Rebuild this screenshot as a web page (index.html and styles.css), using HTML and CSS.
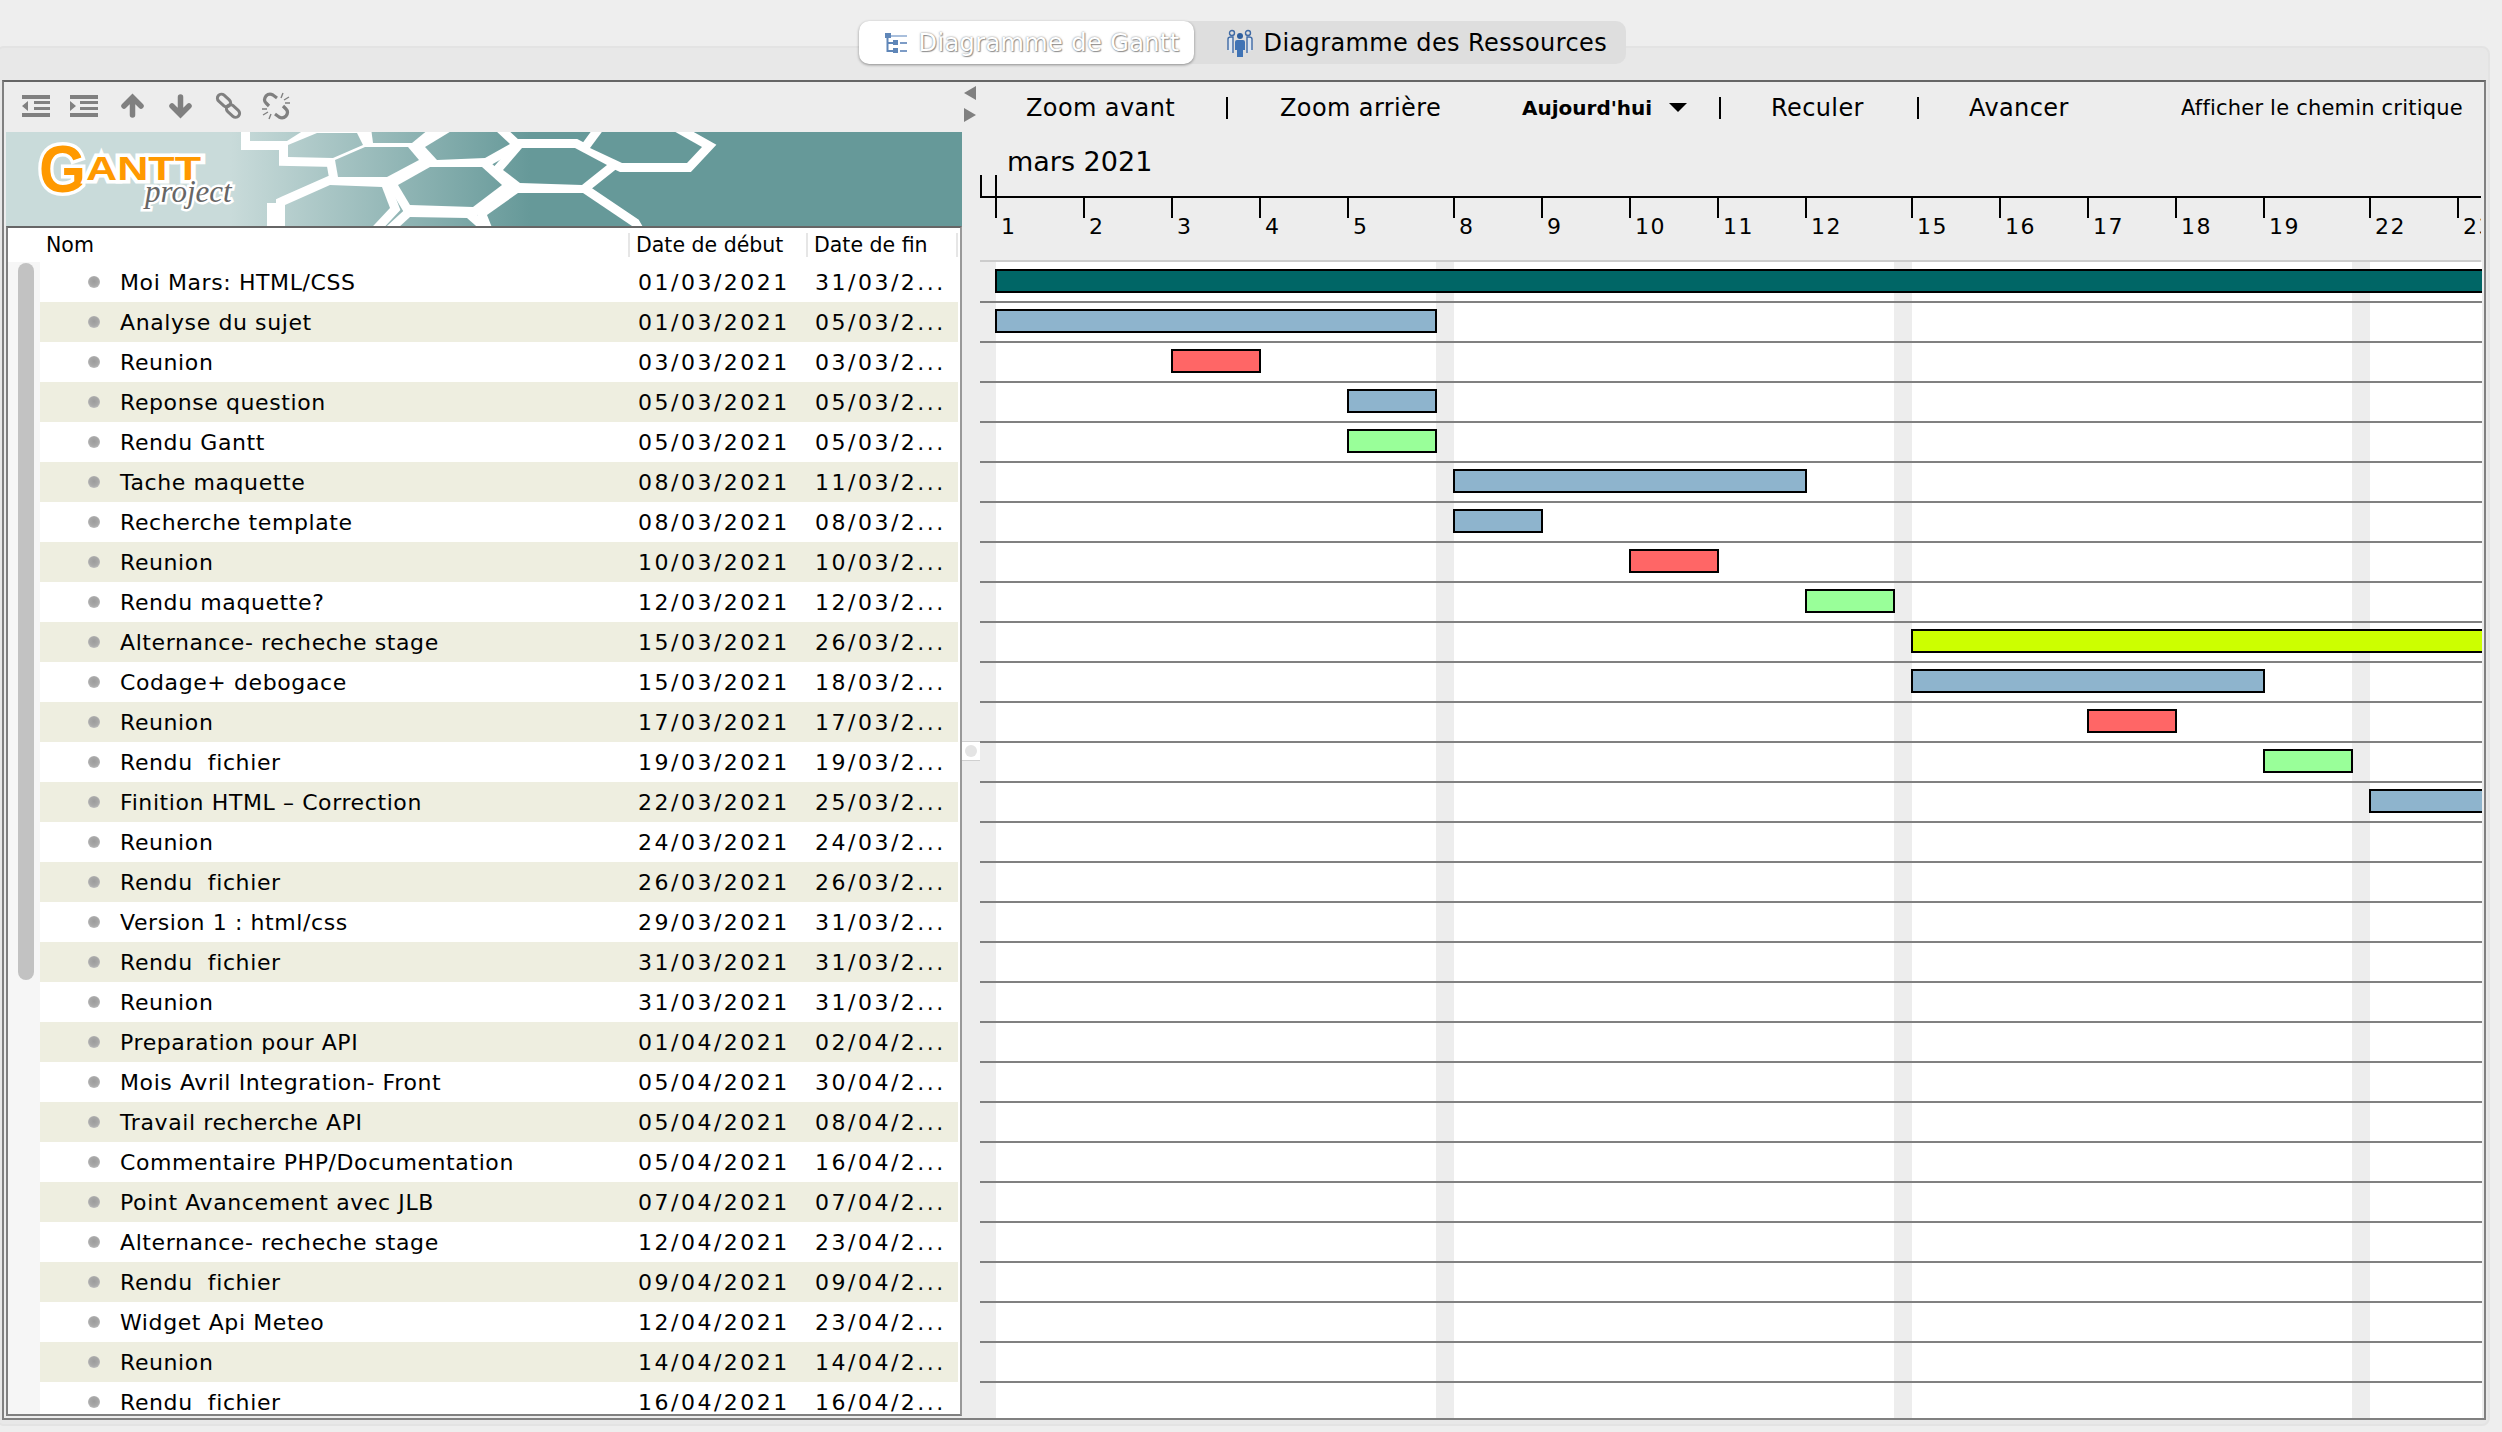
FILE: index.html
```html
<!DOCTYPE html>
<html lang="fr">
<head>
    <meta charset="UTF-8">
    <title>GanttProject</title>
    <link rel="stylesheet" href="styles.css">
</head>
<body>
    <div class="pane"></div>
    <div class="tabs-bar">
        <div class="tabs">
            <div class="tab tab-active">
                <svg class="tab-icon" width="22" height="21" viewBox="0 0 22 21">
                    <rect x="6" y="2" width="16" height="2" fill="#a9bfdc"/>
                    <rect x="0" y="0" width="6" height="5" fill="#5f86b8"/>
                    <path d="M2.5 5V18H8M2.5 10H8" fill="none" stroke="#5f86b8" stroke-width="2"/>
                    <rect x="8" y="7" width="5" height="5" fill="#5f86b8"/>
                    <rect x="8" y="15" width="5" height="5" fill="#5f86b8"/>
                    <rect x="15" y="9" width="7" height="2" fill="#7d9cc6"/>
                    <rect x="15" y="17" width="7" height="2" fill="#7d9cc6"/>
                </svg>
                <span class="tab-label-off">Diagramme de Gantt</span>
            </div>
            <div class="tab tab-other">
                <svg class="tab-icon" width="26" height="28" viewBox="0 0 26 28">
                    <circle cx="5" cy="4" r="2.5" fill="none" stroke="#3f6aa5" stroke-width="1.4"/>
                    <circle cx="21" cy="4" r="2.5" fill="none" stroke="#3f6aa5" stroke-width="1.4"/>
                    <path d="M1 21V10Q1 8 4 8H6V24M25 21V10Q25 8 22 8H20V24" fill="#dce6f2" stroke="#3f6aa5" stroke-width="1.4"/>
                    <circle cx="13" cy="7" r="3" fill="#2f5f9f"/>
                    <path d="M8 21V13Q8 11 10 11H16Q18 11 18 13V21H16V28H10V21Z" fill="#3f73b5"/>
                </svg>
                <span>Diagramme des Ressources</span>
            </div>
        </div>
    </div>

    <div class="frame">
        <div class="left-panel">
            <div class="task-toolbar">
                <svg class="tool-icon" viewBox="0 0 28 24"><path d="M0 1H28V5H0ZM12 7H28V10H12ZM12 13H28V16H12ZM0 19H28V23H0ZM0 12L6 7V17Z"/></svg>
                <svg class="tool-icon" viewBox="0 0 28 24"><path d="M0 1H28V5H0ZM10 7H28V10H10ZM10 13H28V16H10ZM0 19H28V23H0ZM6 12L0 7V17Z"/></svg>
                <svg class="tool-icon tool-line" viewBox="0 0 28 24"><path d="M14.5 21V4M6 12L14.5 3.5L23 12"/></svg>
                <svg class="tool-icon tool-line" viewBox="0 0 28 24"><path d="M14.5 3V20M6 12L14.5 20.5L23 12"/></svg>
                <svg class="tool-icon" viewBox="0 0 28 28"><g fill="none" stroke="#808080" stroke-width="3"><rect x="2.5" y="4.5" width="15" height="8" rx="4" transform="rotate(42 10 8.5)"/><rect x="11.5" y="15" width="15" height="8" rx="4" transform="rotate(42 19 19)"/></g></svg>
                <svg class="tool-icon" viewBox="0 0 28 28"><g fill="none" stroke="#808080" stroke-width="3.2"><path d="M15 6L11 3Q7 1 4 4Q1 8 4 11L7 14"/><path d="M13 22L17 25Q21 27 24 24Q27 20 24 17L21 14"/></g><g stroke="#808080" stroke-width="1.4"><path d="M19 6L21 1M22 8L27 5M23 11L28 11M9 22L7 27M6 20L1 23M5 17L0 17"/></g></svg>
            </div>
            <svg class="banner" width="956" height="94" viewBox="6 132 956 94">
                <defs>
                    <linearGradient id="banner-fill" gradientUnits="userSpaceOnUse" x1="230" y1="0" x2="530" y2="0">
                        <stop offset="0" stop-color="#c9dbda"/>
                        <stop offset="1" stop-color="#669999"/>
                    </linearGradient>
                    <g id="hexes">
                        <polygon points="250,120 320,120 287,141 250,141"/>
                        <polygon points="288,145 317,133 357,133 363,145 333,158 288,157"/>
                        <polygon points="335,160 365,147 408,147 419,160 387,177 338,177"/>
                        <polygon points="370,120 440,120 412,143 373,143"/>
                        <polygon points="425,147 453,130 495,130 510,144 485,158 437,160"/>
                        <polygon points="398,185 430,167 482,167 502,185 473,207 410,205"/>
                        <polygon points="285,205 330,185 382,187 390,208 360,240 285,240"/>
                        <polygon points="385,240 410,217 467,218 492,240"/>
                        <polygon points="522,148 575,148 607,165 582,185 520,183 503,170"/>
                        <polygon points="590,148 607,125 663,125 702,147 687,163 622,163"/>
                        <polygon points="487,215 518,193 583,193 632,226 640,240 497,240"/>
                    </g>
                </defs>
                <rect x="6" y="132" width="956" height="94" fill="url(#banner-fill)"/>
                <use href="#hexes" class="hex-lines"/>
                <rect class="hex-white" x="267" y="203" width="20" height="24"/>
                <use href="#hexes" class="hex-fills"/>
                <text class="logo-g" x="39" y="192" textLength="47" lengthAdjust="spacingAndGlyphs">G</text>
                <text class="logo-antt" x="86" y="180" textLength="115" lengthAdjust="spacingAndGlyphs">ANTT</text>
                <text class="logo-project" x="145" y="202">project</text>
            </svg>
            <div class="table">
                <div class="table-head">
                    <div class="col-name">Nom</div>
                    <div class="col-start">Date de début</div>
                    <div class="col-end">Date de fin</div>
                </div>
                <div class="table-body">
                    <div class="scroll-track"><div class="scroll-thumb"></div></div>
                    <div class="rows">
                        <div class="row"><i class="bullet"></i><div class="cell-name">Moi Mars: HTML/CSS</div><div class="cell-start">01/03/2021</div><div class="cell-end">31/03/2...</div></div>
                        <div class="row"><i class="bullet"></i><div class="cell-name">Analyse du sujet</div><div class="cell-start">01/03/2021</div><div class="cell-end">05/03/2...</div></div>
                        <div class="row"><i class="bullet"></i><div class="cell-name">Reunion</div><div class="cell-start">03/03/2021</div><div class="cell-end">03/03/2...</div></div>
                        <div class="row"><i class="bullet"></i><div class="cell-name">Reponse question</div><div class="cell-start">05/03/2021</div><div class="cell-end">05/03/2...</div></div>
                        <div class="row"><i class="bullet"></i><div class="cell-name">Rendu Gantt</div><div class="cell-start">05/03/2021</div><div class="cell-end">05/03/2...</div></div>
                        <div class="row"><i class="bullet"></i><div class="cell-name">Tache maquette</div><div class="cell-start">08/03/2021</div><div class="cell-end">11/03/2...</div></div>
                        <div class="row"><i class="bullet"></i><div class="cell-name">Recherche template</div><div class="cell-start">08/03/2021</div><div class="cell-end">08/03/2...</div></div>
                        <div class="row"><i class="bullet"></i><div class="cell-name">Reunion</div><div class="cell-start">10/03/2021</div><div class="cell-end">10/03/2...</div></div>
                        <div class="row"><i class="bullet"></i><div class="cell-name">Rendu maquette?</div><div class="cell-start">12/03/2021</div><div class="cell-end">12/03/2...</div></div>
                        <div class="row"><i class="bullet"></i><div class="cell-name">Alternance- recheche stage</div><div class="cell-start">15/03/2021</div><div class="cell-end">26/03/2...</div></div>
                        <div class="row"><i class="bullet"></i><div class="cell-name">Codage+ debogace</div><div class="cell-start">15/03/2021</div><div class="cell-end">18/03/2...</div></div>
                        <div class="row"><i class="bullet"></i><div class="cell-name">Reunion</div><div class="cell-start">17/03/2021</div><div class="cell-end">17/03/2...</div></div>
                        <div class="row"><i class="bullet"></i><div class="cell-name">Rendu&nbsp; fichier</div><div class="cell-start">19/03/2021</div><div class="cell-end">19/03/2...</div></div>
                        <div class="row"><i class="bullet"></i><div class="cell-name">Finition HTML – Correction</div><div class="cell-start">22/03/2021</div><div class="cell-end">25/03/2...</div></div>
                        <div class="row"><i class="bullet"></i><div class="cell-name">Reunion</div><div class="cell-start">24/03/2021</div><div class="cell-end">24/03/2...</div></div>
                        <div class="row"><i class="bullet"></i><div class="cell-name">Rendu&nbsp; fichier</div><div class="cell-start">26/03/2021</div><div class="cell-end">26/03/2...</div></div>
                        <div class="row"><i class="bullet"></i><div class="cell-name">Version 1 : html/css</div><div class="cell-start">29/03/2021</div><div class="cell-end">31/03/2...</div></div>
                        <div class="row"><i class="bullet"></i><div class="cell-name">Rendu&nbsp; fichier</div><div class="cell-start">31/03/2021</div><div class="cell-end">31/03/2...</div></div>
                        <div class="row"><i class="bullet"></i><div class="cell-name">Reunion</div><div class="cell-start">31/03/2021</div><div class="cell-end">31/03/2...</div></div>
                        <div class="row"><i class="bullet"></i><div class="cell-name">Preparation pour API</div><div class="cell-start">01/04/2021</div><div class="cell-end">02/04/2...</div></div>
                        <div class="row"><i class="bullet"></i><div class="cell-name">Mois Avril Integration- Front</div><div class="cell-start">05/04/2021</div><div class="cell-end">30/04/2...</div></div>
                        <div class="row"><i class="bullet"></i><div class="cell-name">Travail recherche API</div><div class="cell-start">05/04/2021</div><div class="cell-end">08/04/2...</div></div>
                        <div class="row"><i class="bullet"></i><div class="cell-name">Commentaire PHP/Documentation</div><div class="cell-start">05/04/2021</div><div class="cell-end">16/04/2...</div></div>
                        <div class="row"><i class="bullet"></i><div class="cell-name">Point Avancement avec JLB</div><div class="cell-start">07/04/2021</div><div class="cell-end">07/04/2...</div></div>
                        <div class="row"><i class="bullet"></i><div class="cell-name">Alternance- recheche stage</div><div class="cell-start">12/04/2021</div><div class="cell-end">23/04/2...</div></div>
                        <div class="row"><i class="bullet"></i><div class="cell-name">Rendu&nbsp; fichier</div><div class="cell-start">09/04/2021</div><div class="cell-end">09/04/2...</div></div>
                        <div class="row"><i class="bullet"></i><div class="cell-name">Widget Api Meteo</div><div class="cell-start">12/04/2021</div><div class="cell-end">23/04/2...</div></div>
                        <div class="row"><i class="bullet"></i><div class="cell-name">Reunion</div><div class="cell-start">14/04/2021</div><div class="cell-end">14/04/2...</div></div>
                        <div class="row"><i class="bullet"></i><div class="cell-name">Rendu&nbsp; fichier</div><div class="cell-start">16/04/2021</div><div class="cell-end">16/04/2...</div></div>
                    </div>
                </div>
            </div>
        </div>

        <div class="splitter">
            <i class="arrow-left"></i>
            <i class="arrow-right"></i>
            <i class="split-dot"></i>
        </div>

        <div class="right-panel">
            <div class="chart-toolbar">
                <span class="btn btn-zoom-in">Zoom avant</span>
                <span class="sep sep-1"></span>
                <span class="btn btn-zoom-out">Zoom arrière</span>
                <span class="btn-today">Aujourd'hui<i class="caret"></i></span>
                <span class="sep sep-2"></span>
                <span class="btn btn-back">Reculer</span>
                <span class="sep sep-3"></span>
                <span class="btn btn-next">Avancer</span>
                <span class="btn-critical">Afficher le chemin critique</span>
            </div>
            <div class="month-row">
                <i class="month-tick month-tick-first"></i>
                <i class="month-tick"></i>
                <span class="month">mars 2021</span>
            </div>
            <div class="days">
                <span class="day day-first"></span>
                <span class="day">1</span><span class="day">2</span><span class="day">3</span><span class="day">4</span><span class="day day-last">5</span>
                <span class="day">8</span><span class="day">9</span><span class="day">10</span><span class="day">11</span><span class="day day-last">12</span>
                <span class="day">15</span><span class="day">16</span><span class="day">17</span><span class="day">18</span><span class="day day-last">19</span>
                <span class="day">22</span><span class="day">23</span>
            </div>
            <div class="chart">
                <i class="weekend" style="left: 0; width: 16px"></i>
                <i class="weekend" style="left: 456px"></i>
                <i class="weekend" style="left: 914px"></i>
                <i class="weekend" style="left: 1372px"></i>
                <div class="chart-row"><i class="bar bar-teal" style="left: 15px; width: 1500px"></i></div>
                <div class="chart-row"><i class="bar bar-blue" style="left: 15px; width: 442px"></i></div>
                <div class="chart-row"><i class="bar bar-red" style="left: 191px; width: 90px"></i></div>
                <div class="chart-row"><i class="bar bar-blue" style="left: 367px; width: 90px"></i></div>
                <div class="chart-row"><i class="bar bar-green" style="left: 367px; width: 90px"></i></div>
                <div class="chart-row"><i class="bar bar-blue" style="left: 473px; width: 354px"></i></div>
                <div class="chart-row"><i class="bar bar-blue" style="left: 473px; width: 90px"></i></div>
                <div class="chart-row"><i class="bar bar-red" style="left: 649px; width: 90px"></i></div>
                <div class="chart-row"><i class="bar bar-green" style="left: 825px; width: 90px"></i></div>
                <div class="chart-row"><i class="bar bar-lime" style="left: 931px; width: 800px"></i></div>
                <div class="chart-row"><i class="bar bar-blue" style="left: 931px; width: 354px"></i></div>
                <div class="chart-row"><i class="bar bar-red" style="left: 1107px; width: 90px"></i></div>
                <div class="chart-row"><i class="bar bar-green" style="left: 1283px; width: 90px"></i></div>
                <div class="chart-row"><i class="bar bar-blue" style="left: 1389px; width: 400px"></i></div>
                <div class="chart-row"></div><div class="chart-row"></div><div class="chart-row"></div>
                <div class="chart-row"></div><div class="chart-row"></div><div class="chart-row"></div>
                <div class="chart-row"></div><div class="chart-row"></div><div class="chart-row"></div>
                <div class="chart-row"></div><div class="chart-row"></div><div class="chart-row"></div>
                <div class="chart-row"></div><div class="chart-row"></div><div class="chart-row"></div>
            </div>
        </div>
    </div>
</body>
</html>
```

FILE: styles.css
```css
* {
    box-sizing: border-box;
}
html, body {
    margin: 0;
    padding: 0;
}
body {
    position: relative;
    width: 2502px;
    height: 1432px;
    overflow: hidden;
    background-color: #eeeeee;
    font-family: "DejaVu Sans", sans-serif;
    color: #000;
    padding: 21px 16px 0 2px;
}
/* faint tab pane behind everything */
.pane {
    position: absolute;
    left: -4px;
    top: 46px;
    width: 2494px;
    height: 1380px;
    z-index: -1;
    background-color: #e8e8e8;
    border: 2px solid #e3e3e3;
    border-radius: 8px;
}
.tabs-bar {
    height: 59px;
    display: flex;
    justify-content: center;
    padding-right: 4px;
}
.tabs {
    display: flex;
    align-self: flex-start;
    height: 43px;
    background-color: #dedede;
    border-radius: 10px;
}
.tab {
    display: flex;
    align-items: center;
    gap: 11px;
    padding-top: 1px;
    font-size: 24px;
    letter-spacing: 0.4px;
    white-space: nowrap;
}
.tab-active {
    width: 335px;
    padding-left: 26px;
    gap: 12px;
    background-color: #fff;
    border-radius: 10px;
    box-shadow: 0 1px 3px rgba(0, 0, 0, 0.4);
}
.tab-other {
    width: 432px;
    padding-left: 33px;
}
.tab-label-off {
    color: #fff;
    text-shadow: 0 0 2px #777, 1px 1px 1px #999;
}
.frame {
    height: 1340px;
    display: flex;
    border: 2px solid #808080;
    border-top-color: #666;
    background-color: #ededed;
}
.left-panel {
    width: 958px;
    display: flex;
    flex-direction: column;
    flex: none;
    padding: 0 0 2px 2px;
}
.task-toolbar {
    height: 50px;
    flex: none;
    display: flex;
    align-items: center;
    gap: 20px;
    padding: 0 0 2px 16px;
}
.tool-icon {
    width: 28px;
    height: 28px;
    fill: #808080;
}
.tool-line {
    fill: none;
    stroke: #808080;
    stroke-width: 5.5;
    stroke-linecap: round;
}
.banner {
    display: block;
    flex: none;
}
.hex-lines {
    fill: none;
    stroke: #fff;
    stroke-width: 18;
}
.hex-white {
    fill: #fff;
}
.hex-fills {
    fill: url(#banner-fill);
    stroke: none;
}
.logo-g, .logo-antt {
    font-family: "Liberation Sans", sans-serif;
    font-weight: bold;
    fill: #ff9900;
    stroke: #fff;
    stroke-width: 7;
    paint-order: stroke;
}
.logo-g {
    font-size: 66px;
}
.logo-antt {
    font-size: 33px;
}
.logo-project {
    font-family: "Liberation Serif", serif;
    font-style: italic;
    font-size: 31px;
    fill: #666;
    stroke: #fff;
    stroke-width: 5;
    paint-order: stroke;
}
.table {
    flex: 1;
    min-height: 0;
    display: flex;
    flex-direction: column;
    background-color: #fff;
    border-top: 2px solid #666;
    border-bottom: 2px solid #808080;
    border-left: 2px solid #808080;
    border-right: 2px solid #999;
    overflow: hidden;
    font-size: 22px;
}
.table-head {
    height: 34px;
    flex: none;
    display: flex;
    align-items: center;
    font-size: 20.5px;
}
.col-name {
    width: 622px;
    padding-left: 38px;
    border-right: 2px solid #e6e6e6;
}
.col-start {
    width: 178px;
    padding-left: 6px;
    border-right: 2px solid #e6e6e6;
}
.col-end {
    flex: 1;
    padding-left: 6px;
    border-right: 2px solid #e6e6e6;
    margin-right: 2px;
}
.table-body {
    flex: 1;
    min-height: 0;
    display: flex;
}
.scroll-track {
    width: 32px;
    flex: none;
    padding: 1px 6px 0 10px;
    background-color: #f6f6f6;
}
.scroll-thumb {
    height: 717px;
    background-color: #c2c2c2;
    border-radius: 8px;
}
.rows {
    flex: 1;
    min-width: 0;
}
.row {
    height: 40px;
    display: flex;
    align-items: center;
    white-space: nowrap;
    margin-right: 2px;
}
.row:nth-child(even) {
    background-color: #eeeee0;
}
.bullet {
    width: 12px;
    height: 12px;
    flex: none;
    margin-left: 48px;
    margin-right: 20px;
    border-radius: 50%;
    background: radial-gradient(circle at 50% 45%, #9c9c9c 0, #a8a8a8 50%, #d0d0d0 100%);
}
.cell-name {
    width: 518px;
    flex: none;
    padding-top: 1px;
    letter-spacing: 0.6px;
}
.cell-start {
    width: 177px;
    flex: none;
    padding-top: 1px;
    letter-spacing: 2.5px;
}
.cell-end {
    padding-top: 1px;
    letter-spacing: 2.5px;
}
.splitter {
    width: 18px;
    flex: none;
    position: relative;
}
.arrow-left, .arrow-right {
    position: absolute;
    left: 2px;
    width: 12px;
    height: 14px;
    background-color: #808080;
}
.arrow-left {
    top: 4px;
    clip-path: polygon(100% 0, 100% 100%, 0 50%);
}
.arrow-right {
    top: 26px;
    clip-path: polygon(0 0, 100% 50%, 0 100%);
}
.split-dot {
    position: absolute;
    left: 0;
    top: 659px;
    width: 18px;
    height: 20px;
    background-color: #fff;
    border-top: 1px solid #d0d0d0;
    border-bottom: 1px solid #d0d0d0;
    display: flex;
    align-items: center;
    justify-content: center;
}
.split-dot::after {
    content: "";
    width: 12px;
    height: 12px;
    border-radius: 50%;
    background-color: #e4e4e4;
}
.right-panel {
    flex: 1;
    min-width: 0;
    display: flex;
    flex-direction: column;
}
.chart-toolbar {
    height: 50px;
    flex: none;
    display: flex;
    align-items: center;
    font-size: 24px;
    letter-spacing: 0.4px;
    white-space: nowrap;
    padding: 1px 0 0 46px;
}
.sep {
    width: 2px;
    height: 22px;
    background-color: #000;
    flex: none;
}
.btn-zoom-in { width: 200px; }
.sep-1 { margin-right: 52px; }
.btn-zoom-out { width: 242px; }
.btn-today {
    width: 197px;
    font-size: 20px;
    letter-spacing: 0;
    font-weight: bold;
    display: flex;
    align-items: center;
}
.caret {
    margin-left: 17px;
    width: 0;
    height: 0;
    border-left: 9px solid transparent;
    border-right: 9px solid transparent;
    border-top: 9px solid #000;
}
.sep-2 { margin-right: 50px; }
.btn-back { width: 146px; }
.sep-3 { margin-right: 50px; }
.btn-next { width: 212px; }
.btn-critical {
    font-size: 21px;
    letter-spacing: 0.2px;
}
.month-row {
    height: 64px;
    flex: none;
    display: flex;
    align-items: flex-end;
}
.month-tick {
    width: 2px;
    height: 21px;
    flex: none;
    background-color: #000;
}
.month-tick-first {
    margin-right: 13px;
}
.month {
    align-self: flex-start;
    font-size: 27px;
    line-height: 60px;
    margin-left: 10px;
}
.days {
    height: 66px;
    flex: none;
    display: flex;
    overflow: hidden;
    border-top: 2px solid #000;
    border-bottom: 2px solid #ccc;
    margin-right: 3px;
}
.day {
    width: 88px;
    flex: none;
    font-size: 22px;
    letter-spacing: 1.5px;
    padding: 16px 0 0 6px;
    position: relative;
}
.day::before {
    content: "";
    position: absolute;
    left: 0;
    top: 0;
    width: 2px;
    height: 20px;
    background-color: #000;
}
.day-first {
    width: 15px;
    padding: 0;
}
.day-first::before {
    display: none;
}
.day-last {
    width: 106px;
}
.chart {
    flex: 1;
    min-height: 0;
    position: relative;
    overflow: hidden;
    background-color: #fff;
    padding-top: 1px;
    margin-right: 2px;
}
.chart-row {
    height: 40px;
    position: relative;
    border-bottom: 2px solid #808080;
}
.weekend {
    position: absolute;
    top: 0;
    bottom: 0;
    width: 18px;
    background-color: #ededed;
}
.bar {
    position: absolute;
    top: 6px;
    height: 24px;
    border: 2px solid #000;
}
.bar-teal { background-color: #006666; }
.bar-blue { background-color: #8eb4cd; }
.bar-red { background-color: #ff6666; }
.bar-green { background-color: #99ff99; }
.bar-lime { background-color: #ccff00; }
```
